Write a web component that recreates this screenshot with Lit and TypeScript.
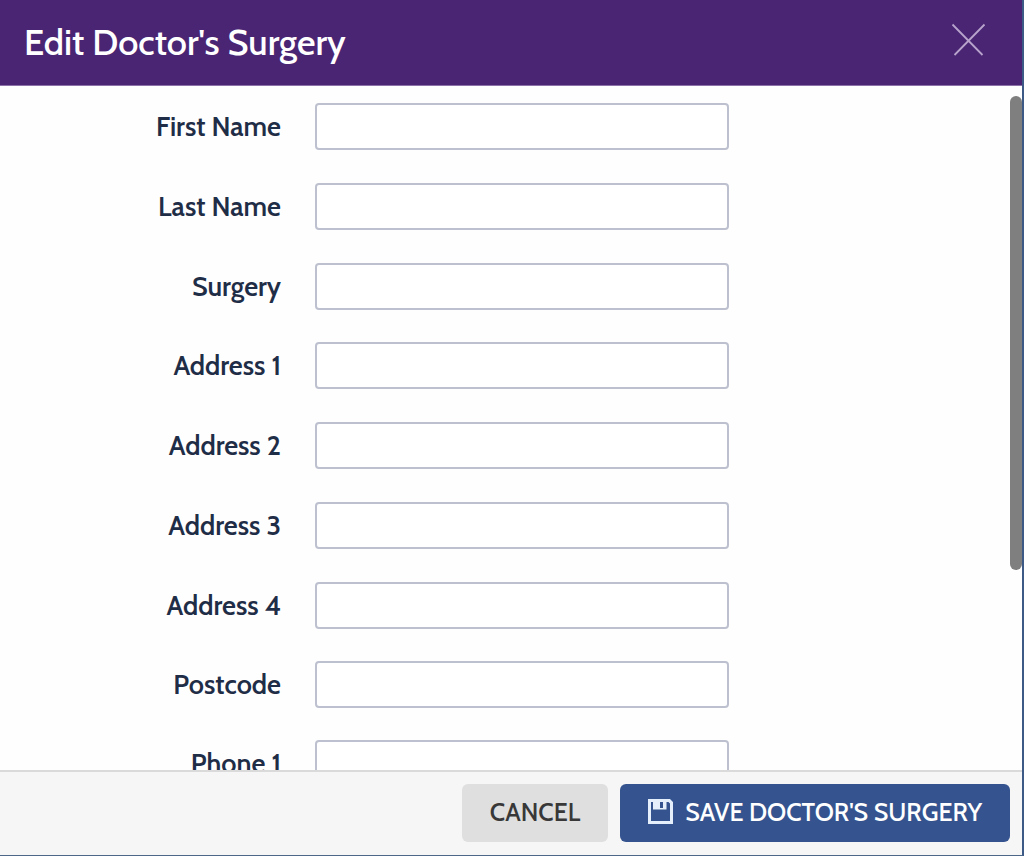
import { LitElement, html, css } from "lit";
import { customElement } from "lit/decorators.js";

const GROUPS = [
  { key: "doctor", fields: ["First Name", "Last Name", "Surgery"] },
  { key: "address", fields: ["Address 1", "Address 2", "Address 3", "Address 4"] },
  { key: "postcode", fields: ["Postcode"] },
  { key: "phone", fields: ["Phone 1"] },
];

@customElement("app-root")
export class AppRoot extends LitElement {
  static styles = css`
    :host {
      display: block;
      font-family: Cabin, Lato, "Open Sans", sans-serif;
      color: #1f2d47;
    }
    * {
      box-sizing: border-box;
    }
    .dialog {
      display: flex;
      flex-direction: column;
      height: 100vh;
      background: #fefefe;
      border-right: 2px solid #3d5a86;
      border-bottom: 1px solid #4c6788;
      overflow: hidden;
    }
    .header {
      display: flex;
      align-items: center;
      justify-content: space-between;
      flex: none;
      margin-right: -2px;
      padding: 18px 37px 18px 24px;
      background: #4a2574;
      border-bottom: 1px solid #8c70a8;
      color: #fff;
    }
    .title {
      margin: 0;
      font-size: 36px;
      line-height: 49px;
      font-weight: 500;
    }
    .close {
      display: block;
      margin: 0 0 6px;
      padding: 0;
      border: 0;
      background: none;
      color: #b7a3cb;
      cursor: pointer;
    }
    .close svg,
    .save svg {
      display: block;
    }
    .main {
      position: relative;
      display: flex;
      flex: 1;
      min-height: 0;
    }
    .form {
      display: flex;
      flex-direction: column;
      gap: 32px;
      flex: 1;
      padding-top: 17px;
      overflow-y: auto;
      scrollbar-width: none;
    }
    .group {
      display: grid;
      row-gap: 33px;
      flex: none;
    }
    .row {
      display: grid;
      grid-template-columns: 281px minmax(0, 414px);
      column-gap: 34px;
      align-items: center;
    }
    .row label {
      text-align: right;
      font-size: 27px;
      line-height: 32px;
      font-weight: 600;
    }
    .row input {
      width: 100%;
      height: 47px;
      padding: 0 12px;
      border: 2px solid #bdc0cf;
      border-radius: 4px;
      background: #fff;
      color: inherit;
      font: inherit;
      font-size: 24px;
    }
    .track {
      position: absolute;
      top: 10px;
      right: 0;
      bottom: 6px;
      width: 12px;
      pointer-events: none;
    }
    .thumb {
      height: 71%;
      border-radius: 6px;
      background: #7f7f7f;
    }
    .footer {
      display: flex;
      justify-content: flex-end;
      gap: 12px;
      flex: none;
      padding: 12px 12px 13px;
      background: #f6f6f6;
      border-top: 2px solid #dadada;
    }
    .button {
      display: flex;
      align-items: center;
      justify-content: center;
      gap: 12px;
      height: 58px;
      padding: 0 28px 3px;
      border: 0;
      border-radius: 6px;
      font-family: inherit;
      font-size: 25px;
      line-height: 30px;
      font-weight: 500;
      white-space: nowrap;
      text-transform: uppercase;
      cursor: pointer;
    }
    .cancel {
      background: #dfdfdf;
      color: #383838;
    }
    .save {
      background: #35548f;
      color: #fff;
    }
  `;

  render() {
    return html`
      <section class="dialog" role="dialog" aria-labelledby="title">
        <header class="header">
          <h1 class="title" id="title">Edit Doctor's Surgery</h1>
          <button class="close" type="button" aria-label="Close">
            <svg width="36" height="36" viewBox="0 0 36 36" fill="none" stroke="currentColor" stroke-width="1.8">
              <path d="M1.5 2.5 31.5 33M33.5 2.5 3.5 33" />
            </svg>
          </button>
        </header>
        <div class="main">
          <form class="form">
            ${GROUPS.map(
              (group) => html`
                <div class="group">
                  ${group.fields.map(
                    (name, i) => html`
                      <div class="row">
                        <label for="${group.key}-${i}">${name}</label>
                        <input id="${group.key}-${i}" type="text" />
                      </div>
                    `
                  )}
                </div>
              `
            )}
          </form>
          <div class="track"><div class="thumb"></div></div>
        </div>
        <footer class="footer">
          <button class="button cancel" type="button">Cancel</button>
          <button class="button save" type="button">
            <svg width="25" height="25" viewBox="0 0 25 25" aria-hidden="true">
              <path
                fill="#e4effb"
                fill-rule="evenodd"
                d="M0 0H22L25 3V25H0ZM3 3V22H22V4.500L20.500 3H18.500V10.500H5V3ZM12 3V9H15V3Z"
              />
            </svg>
            <span>Save Doctor's Surgery</span>
          </button>
        </footer>
      </section>
    `;
  }
}
